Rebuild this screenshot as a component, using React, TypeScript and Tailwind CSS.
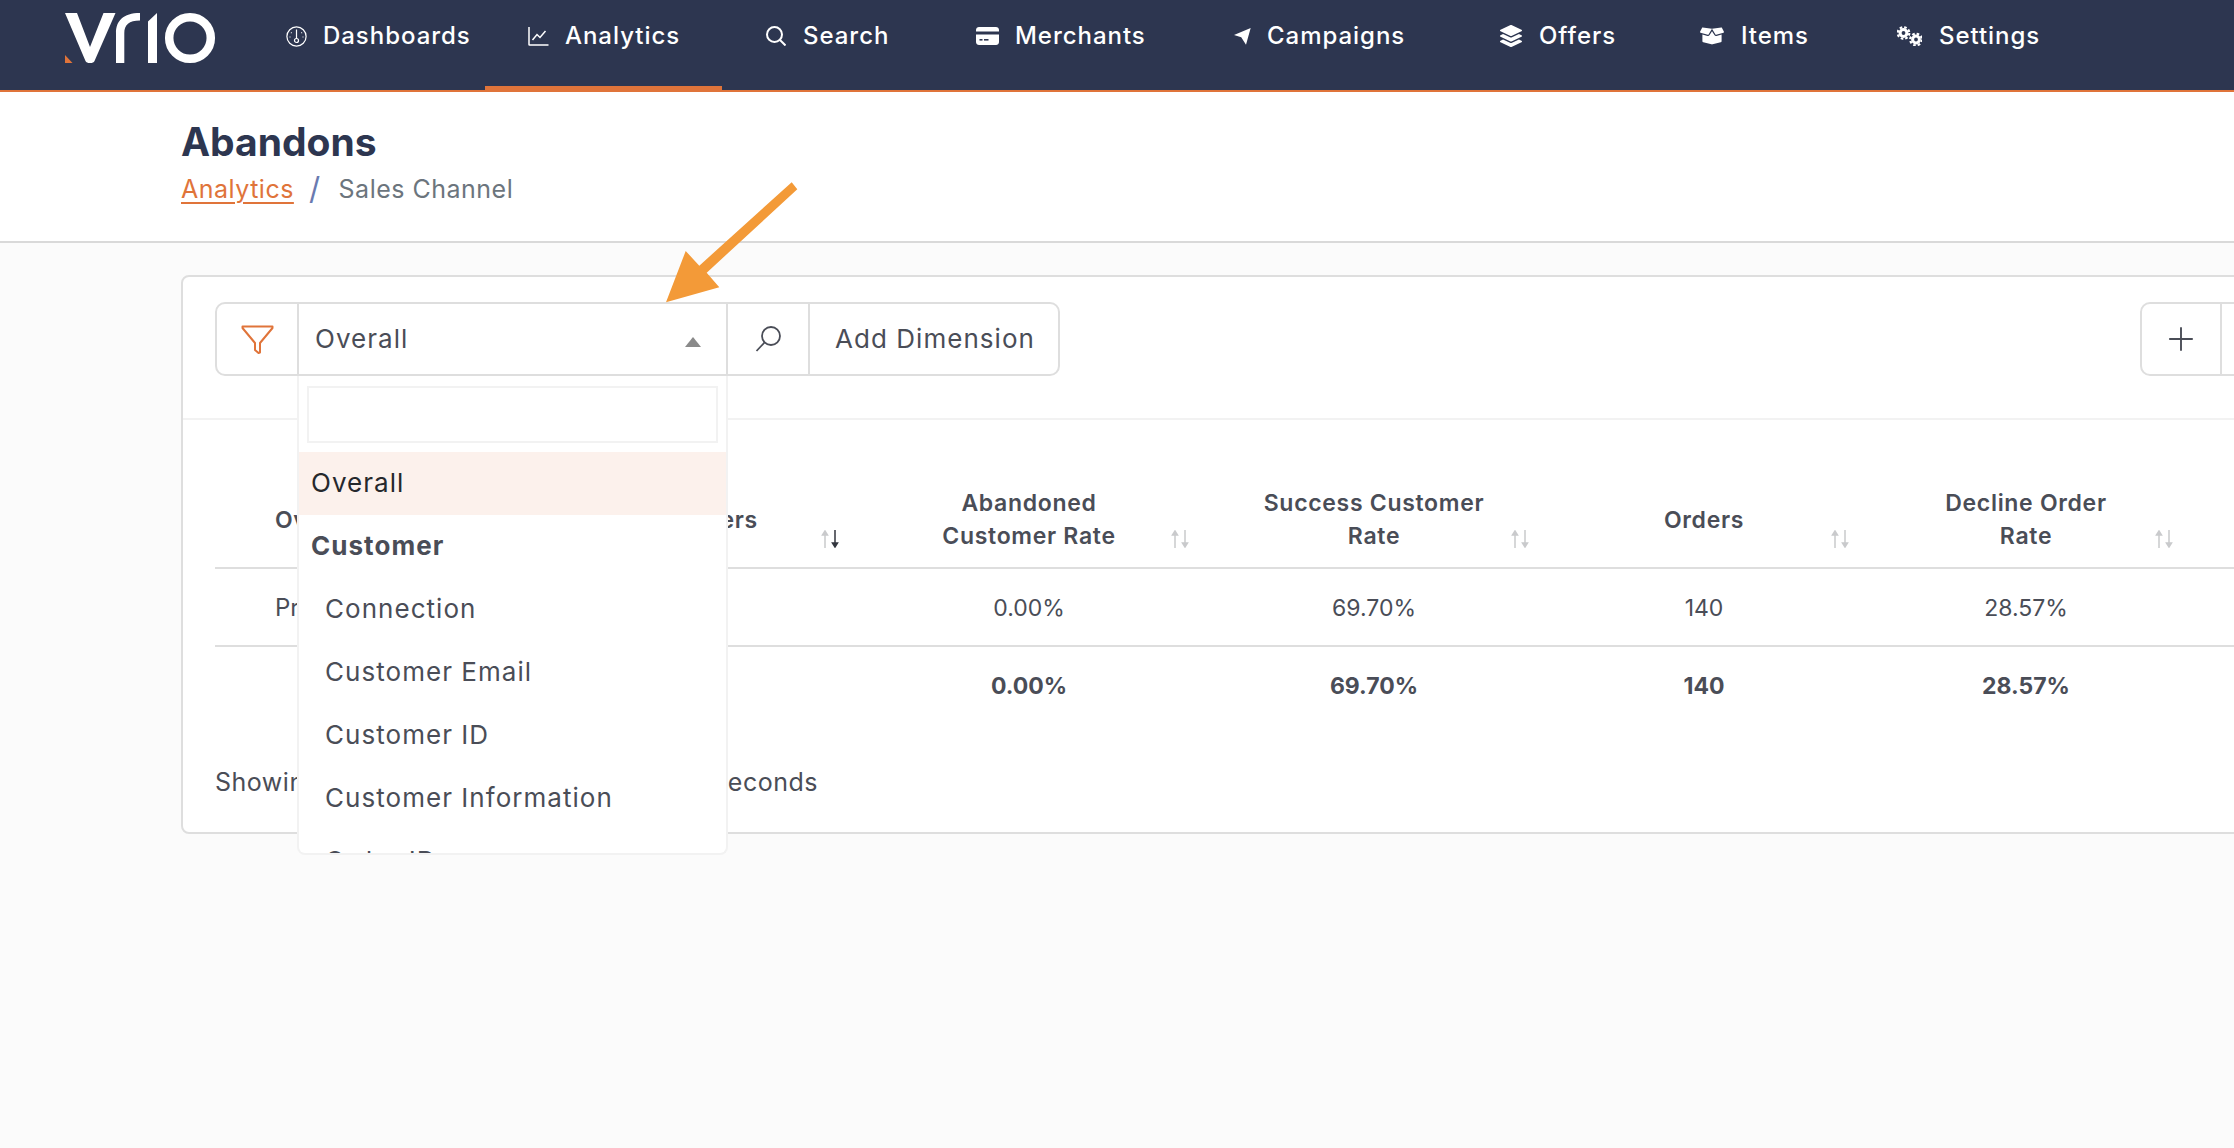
import { Plus } from 'lucide-react';
import { FaLayerGroup, FaBoxOpen } from 'react-icons/fa';

function GaugeIcon() {
  return (
    <svg width="21" height="21" viewBox="0 0 21 21" fill="none" stroke="white" strokeWidth="1.2">
      <circle cx="10.5" cy="10.5" r="9.6" />
      <path d="M10.5 3.5V12.5" />
      <circle cx="10.5" cy="14.5" r="2" />
      <path d="M5 6.5l.6.6M16 6.5l-.6.6M3.5 11h1M16.5 11h1" />
    </svg>
  );
}

function ChartIcon() {
  return (
    <svg width="21" height="20" viewBox="0 0 21 20" fill="none" stroke="white" strokeWidth="1.5">
      <path d="M1 1V18.5C1 19 1.2 19 1.5 19H20.5" />
      <path d="M4.5 14L9 8.5L12 11.5L17.5 5" />
    </svg>
  );
}

function NavSearchIcon() {
  return (
    <svg width="20" height="20" viewBox="0 0 20 20" fill="none" stroke="white" strokeWidth="2">
      <circle cx="8.5" cy="8.5" r="7.500" />
      <path d="M14 14L19.500 19.500" />
    </svg>
  );
}

function CardIcon() {
  return (
    <svg width="23" height="18" viewBox="0 0 23 18" fill="white">
      <path d="M3 0H20C21.6 0 23 1.3 23 3V4.500H0V3C0 1.300 1.400 0 3 0Z" />
      <path d="M0 7.500H23V15C23 16.700 21.600 18 20 18H3C1.400 18 0 16.700 0 15V7.500Z" />
      <rect x="3.500" y="12" width="3" height="1.600" fill="#2d3650" />
      <rect x="8" y="12" width="4.500" height="1.600" fill="#2d3650" />
    </svg>
  );
}

function ArrowIcon() {
  return (
    <svg width="17" height="17" viewBox="0 0 16 16" fill="white">
      <path d="M15.700 0L0 6.700L6.800 8.600L11.300 15.800Z" />
    </svg>
  );
}

function GearsIcon() {
  return (
    <svg width="25" height="20" viewBox="0 0 25 20" fill="none" stroke="white">
      <circle cx="6.500" cy="7" r="3.400" strokeWidth="3" />
      <circle cx="6.500" cy="7" r="5.800" strokeWidth="2.200" strokeDasharray="2.600 1.950" />
      <circle cx="19" cy="13.500" r="3.400" strokeWidth="3" />
      <circle cx="19" cy="13.500" r="5.800" strokeWidth="2.200" strokeDasharray="2.600 1.950" />
    </svg>
  );
}

const tabs = [
  { label: 'Dashboards', icon: <GaugeIcon />, box: 'pl-[69px] pr-[13px] gap-[16px] pb-[18px]', text: 'w-[149px]' },
  { label: 'Analytics', icon: <ChartIcon />, box: 'pl-[43px] pr-[45px] gap-[16px] pb-[14px] border-b-4 border-[#e0743a]', text: 'w-[112px]' },
  { label: 'Search', icon: <NavSearchIcon />, box: 'pl-[44px] pr-[44px] gap-[17px] pb-[18px]', text: 'w-[85px]' },
  { label: 'Merchants', icon: <CardIcon />, box: 'pl-[44px] pr-[44px] gap-[16px] pb-[18px]', text: 'w-[130px]' },
  { label: 'Campaigns', icon: <ArrowIcon />, box: 'pl-[45px] pr-[44px] gap-[16px] pb-[18px]', text: 'w-[145px]' },
  { label: 'Offers', icon: <FaLayerGroup size={22} color="white" />, box: 'pl-[44px] pr-[44px] gap-[17px] pb-[18px]', text: 'w-[72px]' },
  { label: 'Items', icon: <FaBoxOpen size={24} color="white" />, box: 'pl-[45px] pr-[44px] gap-[17px] pb-[18px]', text: 'w-[68px]' },
  { label: 'Settings', icon: <GearsIcon />, box: 'pl-[44px] pr-[44px] gap-[17px] pb-[18px]', text: 'w-[99px]' },
];

function Logo() {
  return (
    <svg width="152" height="52" viewBox="65 12 152 52" className="shrink-0" fill="white">
      <path d="M65 13H77L90 47L103.500 13H115.500L94.500 61C93.800 62.500 92.500 63 90 63C87.500 63 86.300 62.500 85.500 61Z" />
      <path d="M116 63V33C116 21 123 13 140 13V20.500C129 20.500 124.300 25 124.300 33V63Z" />
      <path d="M148 21.500L157 13V63H148Z" />
      <circle cx="190" cy="38" r="20.800" fill="none" stroke="white" strokeWidth="8.500" />
      <path d="M65 55L72.500 63H65Z" fill="#e0743a" />
    </svg>
  );
}

function SortIcon({ active, pos }: { active?: boolean; pos: string }) {
  return (
    <svg width="20" height="18" viewBox="0 0 20 18" className={`absolute bottom-[19px] ${pos}`}>
      <path d="M5 18V4M2.500 5L5 1L7.500 5Z" stroke="#c9cacc" fill="#c9cacc" strokeWidth="1.500" />
      <path d="M15 0V14M12.500 13L15 17L17.500 13Z" stroke={active ? '#33363f' : '#c9cacc'} fill={active ? '#33363f' : '#c9cacc'} strokeWidth="1.500" />
    </svg>
  );
}

const options = ['Connection', 'Customer Email', 'Customer ID', 'Customer Information', 'Order ID'];

export default function App() {
  return (
    <div className="relative flex h-[1148px] w-full flex-col overflow-hidden bg-[#fbfbfb] font-['Inter',sans-serif] text-[#4a4d57]">
      {/* Top nav */}
      <nav className="flex h-[92px] shrink-0 border-b-2 border-[#e0743a] bg-[#2d3650] pl-[65px]">
        <div className="pt-[12px]">
          <Logo />
        </div>
        {tabs.map((t) => (
          <div key={t.label} className={`flex h-[90px] items-center ${t.box}`}>
            {t.icon}
            <span className={`whitespace-nowrap text-[24px] font-medium tracking-[0.04em] text-white ${t.text}`}>{t.label}</span>
          </div>
        ))}
      </nav>

      {/* Page title */}
      <header className="h-[151px] shrink-0 border-b-2 border-[#d9d9d9] bg-white pl-[181px] pt-[26px]">
        <h1 className="text-[39px] font-bold leading-[48px] text-[#2d3650]">Abandons</h1>
        <div className="mt-[3px] flex items-center text-[25px] leading-[40px] tracking-[0.02em]">
          <a className="text-[#e0743a] underline decoration-2 underline-offset-4">Analytics</a>
          <span className="ml-[15px] text-[31px] text-[#6a7ab0]">/</span>
          <span className="ml-[18px] text-[#6c757d]">Sales Channel</span>
        </div>
      </header>

      <main className="flex-1 pl-[181px] pt-[32px]">
        <section className="h-[559px] w-[2200px] rounded-[8px] border-2 border-[#dedede] bg-white">
          {/* Toolbar */}
          <div className="flex h-[143px] border-b-2 border-[#f2f2f2] pl-[32px] pt-[25px]">
            <div className="relative flex h-[74px] w-[845px] rounded-[10px] border-2 border-[#dedede] text-[26px] tracking-[0.04em]">
              <div className="flex w-[82px] items-center justify-center border-r-2 border-[#dedede]">
                <svg width="33" height="29" viewBox="0 0 33 29" fill="none" stroke="#e0743a" strokeWidth="2" strokeLinejoin="round">
                  <path d="M1.500 1.500H31.500V3L19 18V27.500L17.500 28L14 25V18L1.500 3Z" />
                </svg>
              </div>
              <div className="flex w-[429px] items-center justify-between border-r-2 border-[#dedede] pl-[16px] pr-[25px]">
                <span className="pb-[2px]">Overall</span>
                <div className="mt-[6px] h-0 w-0 border-x-[8px] border-b-[10px] border-x-transparent border-b-[#8a8a8a]" />
              </div>
              <div className="flex w-[82px] items-center justify-center border-r-2 border-[#dedede]">
                <svg width="26" height="26" viewBox="0 0 26 26" fill="none" stroke="#4a4d57" strokeWidth="1.800">
                  <circle cx="16" cy="10" r="9" />
                  <path d="M9.500 16.500L1.500 25" />
                </svg>
              </div>
              <div className="flex flex-1 items-center whitespace-nowrap pb-[2px] pl-[25px]">Add Dimension</div>

              {/* Open dropdown */}
              <div className="absolute left-[80px] top-[72px] z-10 flex h-[479px] w-[431px] flex-col overflow-hidden rounded-b-[8px] border-2 border-t-0 border-[#f2f2f2] bg-white">
                <div className="px-[8px] pb-[9px] pt-[10px]">
                  <input className="block h-[57px] w-full border-2 border-[#f2f2f2] bg-white outline-none" />
                </div>
                <div className="flex h-[63px] shrink-0 items-center bg-[#fcf1ec] pb-[2px] pl-[12px] text-[#26282c]">Overall</div>
                <div className="flex h-[63px] shrink-0 items-center pb-[2px] pl-[12px] font-bold">Customer</div>
                {options.map((o) => (
                  <div key={o} className="flex h-[63px] shrink-0 items-center pb-[2px] pl-[26px]">{o}</div>
                ))}
              </div>
            </div>
            <div className="ml-[1080px] flex h-[74px] w-[200px] rounded-[10px] border-2 border-[#dedede]">
              <div className="flex w-[80px] items-center justify-center border-r-2 border-[#dedede]">
                <Plus size={38} strokeWidth={1.200} />
              </div>
            </div>
          </div>

          {/* Table */}
          <div className="ml-[32px] mr-[-20px] text-[23px]">
            <div className="flex h-[149px] border-b-2 border-[#dedede] pt-[53px] font-semibold leading-[33px] tracking-[0.03em]">
              <div className="flex w-[285px] items-center pl-[60px]">Overall</div>
              <div className="relative flex w-[365px] items-center pl-[130px]">
                Customers
                <SortIcon active pos="left-[320px]" />
              </div>
              <div className="relative flex w-[328px] items-center justify-center text-center">
                Abandoned<br />Customer Rate
                <SortIcon pos="right-[3px]" />
              </div>
              <div className="relative flex w-[362px] items-center justify-center text-center">
                Success Customer<br />Rate
                <SortIcon pos="right-[25px]" />
              </div>
              <div className="relative flex w-[298px] items-center justify-center text-center">
                Orders
                <SortIcon pos="right-[3px]" />
              </div>
              <div className="relative flex w-[346px] items-center justify-center text-center">
                Decline Order<br />Rate
                <SortIcon pos="right-[25px]" />
              </div>
            </div>
            <div className="flex h-[78px] items-center border-b-2 border-[#dedede] pt-[2px]">
              <div className="w-[285px] pl-[60px] text-[24px]">Production</div>
              <div className="w-[365px]" />
              <div className="w-[328px] text-center">0.00%</div>
              <div className="w-[362px] text-center">69.70%</div>
              <div className="w-[298px] text-center">140</div>
              <div className="w-[346px] text-center">28.57%</div>
            </div>
            <div className="flex h-[76px] items-center pt-[2px] font-bold">
              <div className="w-[650px]" />
              <div className="w-[328px] text-center">0.00%</div>
              <div className="w-[362px] text-center">69.70%</div>
              <div className="w-[298px] text-center">140</div>
              <div className="w-[346px] text-center">28.57%</div>
            </div>
            <div className="mt-[41px] flex w-[603px] justify-between text-[25px] leading-[36px] tracking-[0.02em]">
              <span>Showing 1 of 1 results</span>
              <span>in 0.2 seconds</span>
            </div>
          </div>
        </section>
      </main>

      {/* Annotation arrow */}
      <svg width="140" height="125" viewBox="660 180 140 125" className="absolute left-[660px] top-[180px] z-20">
        <path d="M791.700 182.300L797.300 189.300L706.700 272.700L719.300 287.300L666 302.300L685.700 251L699.300 265.700Z" fill="#f39a38" />
      </svg>
    </div>
  );
}
